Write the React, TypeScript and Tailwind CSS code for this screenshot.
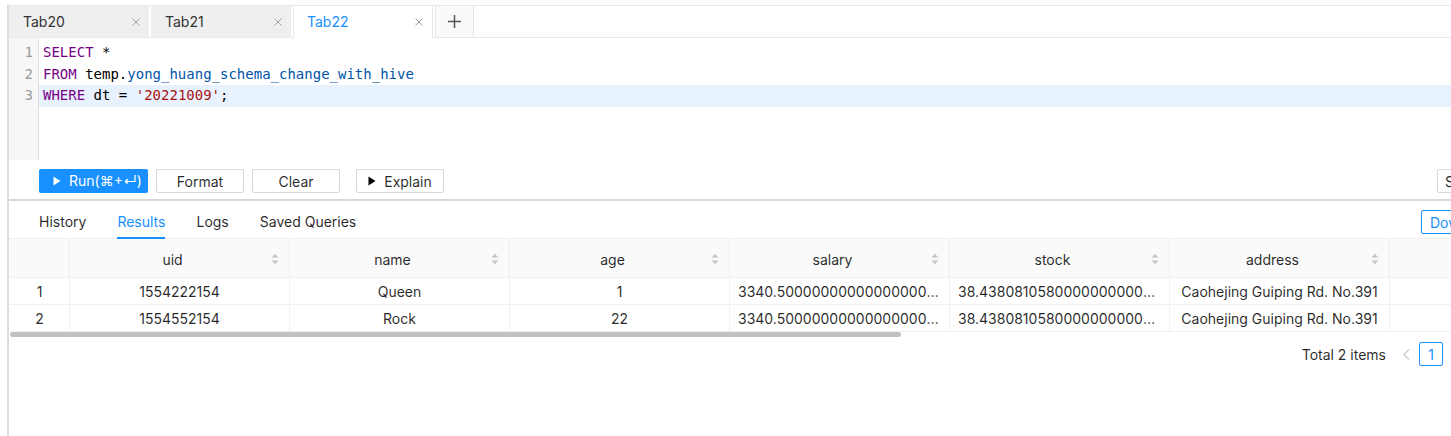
import React from "react";

const SortIcon = () => (
  <svg width="8" height="12" viewBox="0 0 8 12" className="shrink-0">
    <path d="M4 0.8 L7.4 4.6 H0.6 Z" fill="#c4c4c4" />
    <path d="M4 11.2 L7.4 7.4 H0.6 Z" fill="#c4c4c4" />
  </svg>
);

const CloseIcon = () => (
  <svg width="8" height="8" viewBox="0 0 8 8">
    <path d="M0.5 0.5 L7.5 7.5 M7.5 0.5 L0.5 7.5" stroke="#a0a0a0" strokeWidth="1" />
  </svg>
);

const PlayIcon = ({ color }: { color: string }) => (
  <svg width="8" height="10" viewBox="0 0 8 10">
    <path d="M0.5 0.5 L7.5 5 L0.5 9.5 Z" fill={color} />
  </svg>
);

const tabs = [
  { name: "Tab20", active: false },
  { name: "Tab21", active: false },
  { name: "Tab22", active: true },
];

const columns = ["uid", "name", "age", "salary", "stock", "address", ""];

const rows = [
  ["1", "1554222154", "Queen", "1", "3340.50000000000000000000", "38.43808105800000000000000", "Caohejing Guiping Rd. No.391", ""],
  ["2", "1554552154", "Rock", "22", "3340.50000000000000000000", "38.43808105800000000000000", "Caohejing Guiping Rd. No.391", ""],
];

export default function App() {
  return (
    <div className="w-[1451px] h-[436px] overflow-hidden bg-white font-['Inter',sans-serif] text-[14px] text-[rgba(0,0,0,0.85)]">
      <div className="ml-[7px] mt-[5px] h-[431px] w-[1444px] border-l-2 border-[#dcdcdc] flex flex-col">
        {/* SQL tab bar */}
        <div className="h-[33px] border-t border-b border-[#e8e8e8] flex items-stretch shrink-0">
          {tabs.map((t) => (
            <div
              key={t.name}
              className={
                t.active
                  ? "w-[140px] mr-[2px] -mb-px bg-white border-l border-r border-[#e8e8e8] flex items-center justify-between pl-[13px] pr-[9px] text-[#1890ff]"
                  : "w-[140px] mr-[2px] bg-[#efefef] flex items-center justify-between pl-[14px] pr-[9px] text-[#333]"
              }
            >
              <span className="leading-[22px]">{t.name}</span>
              <CloseIcon />
            </div>
          ))}
          <div className="w-[39px] bg-[#fafafa] border-l border-r border-[#e8e8e8] flex items-center justify-center">
            <svg width="13" height="13" viewBox="0 0 13 13">
              <path d="M6.5 0 V13 M0 6.5 H13" stroke="#555" strokeWidth="1.5" />
            </svg>
          </div>
        </div>

        {/* Editor */}
        <div className="h-[122px] flex shrink-0 font-['DejaVu_Sans_Mono',monospace] text-[14px]">
          <div className="w-[30px] bg-[#f7f7f7] border-r border-[#dddddd] pt-[4px] text-right pr-[5px] text-[#999] text-[13.5px]">
            <div className="leading-[21.5px]">1</div>
            <div className="leading-[21.5px]">2</div>
            <div className="leading-[21.5px]">3</div>
          </div>
          <div className="flex-1 pt-[4px] text-black">
            <div className="leading-[21.5px] pl-[4px] whitespace-pre">
              <span className="text-[#770088]">SELECT</span> *
            </div>
            <div className="leading-[21.5px] pl-[4px] whitespace-pre">
              <span className="text-[#770088]">FROM</span> temp.<span className="text-[#0055aa]">yong_huang_schema_change_with_hive</span>
            </div>
            <div className="leading-[21.5px] pl-[4px] whitespace-pre bg-[#e8f2ff]">
              <span className="text-[#770088]">WHERE</span> dt = <span className="text-[#aa1111]">'20221009'</span>;
            </div>
          </div>
        </div>

        {/* Buttons */}
        <div className="h-[41px] shrink-0 flex items-start pt-[9px] pl-[30px] border-b-2 border-[#d9d9d9]">
          <button className="h-[24px] w-[109px] rounded-[2px] bg-[#1890ff] text-white flex items-center pl-[14px] gap-[8px] shrink-0">
            <PlayIcon color="#ffffff" />
            <span className="leading-[22px]">Run(⌘+↵)</span>
          </button>
          <button className="h-[24px] w-[88px] ml-[8px] rounded-[2px] border border-[#d9d9d9] bg-white flex items-center justify-center shrink-0">
            Format
          </button>
          <button className="h-[24px] w-[88px] ml-[8px] rounded-[2px] border border-[#d9d9d9] bg-white flex items-center justify-center shrink-0">
            Clear
          </button>
          <button className="h-[24px] w-[88px] ml-[16px] rounded-[2px] border border-[#d9d9d9] bg-white flex items-center justify-center gap-[8px] shrink-0">
            <PlayIcon color="#000000" />
            <span>Explain</span>
          </button>
          <div className="ml-auto w-[14px] shrink-0 overflow-visible">
            <button className="h-[24px] px-[7px] rounded-[2px] border border-[#d9d9d9] bg-white flex items-center whitespace-nowrap">
              Save
            </button>
          </div>
        </div>

        {/* Result tabs */}
        <div className="h-[38px] shrink-0 flex items-start border-b border-[#f0f0f0] pl-[30px]">
          {["History", "Results", "Logs", "Saved Queries"].map((t) => (
            <div
              key={t}
              className={
                t === "Results"
                  ? "mr-[31px] pt-[10px] pb-[4px] leading-[22px] border-b-2 border-[#1890ff] text-[#1890ff]"
                  : "mr-[31px] pt-[10px] pb-[4px] leading-[22px] border-b-2 border-transparent"
              }
            >
              {t}
            </div>
          ))}
          <div className="ml-auto w-[30px] shrink-0 overflow-visible mt-[9px]">
            <button className="h-[24px] px-[8px] rounded-[2px] border border-[#1890ff] text-[#1890ff] bg-white flex items-center whitespace-nowrap">
              Download
            </button>
          </div>
        </div>

        {/* Table */}
        <div className="ml-px overflow-hidden">
          <div className="flex h-[39px] bg-[#fafafa] border-b border-[#f0f0f0] w-max">
            <div className="w-[60px] border-r border-[#f0f0f0] shrink-0" />
            {columns.map((c, i) => (
              <div key={i} className="w-[220px] shrink-0 border-r border-[#f0f0f0] flex items-center pt-[2px] pl-[8px] pr-[10px]">
                {c ? (
                  <>
                    <span className="flex-1 text-center">{c}</span>
                    <span className="ml-[4px]">
                      <SortIcon />
                    </span>
                  </>
                ) : null}
              </div>
            ))}
          </div>
          {rows.map((r) => (
            <div key={r[0]} className="flex h-[27px] border-b border-[#f0f0f0] w-max">
              <div className="w-[60px] border-r border-[#f0f0f0] shrink-0 flex items-center justify-center pt-[1px]">{r[0]}</div>
              {r.slice(1).map((v, i) => (
                <div
                  key={i}
                  className={
                    i === 3 || i === 4
                      ? "w-[220px] shrink-0 border-r border-[#f0f0f0] flex items-center px-[8px] pt-[1px] overflow-hidden"
                      : "w-[220px] shrink-0 border-r border-[#f0f0f0] flex items-center justify-center px-[8px] pt-[1px]"
                  }
                >
                  <span className={i === 3 || i === 4 ? "truncate block w-full" : ""}>{v}</span>
                </div>
              ))}
            </div>
          ))}
          <div className="h-[5px] w-[891px] rounded-full bg-[#c1c1c1]" />
        </div>

        {/* Pagination */}
        <div className="flex items-center justify-end pr-[8px] mt-[5px]">
          <span className="leading-[22px] pt-[1px]">Total 2 items</span>
          <span className="ml-[8px] w-[24px] h-[24px] flex items-center justify-center">
            <svg width="7" height="11" viewBox="0 0 7 11">
              <path d="M6 0.5 L1 5.5 L6 10.5" stroke="#c8c8c8" strokeWidth="1.2" fill="none" />
            </svg>
          </span>
          <span className="ml-px w-[24px] h-[24px] rounded-[2px] border border-[#1890ff] text-[#1890ff] flex items-center justify-center">
            1
          </span>
        </div>
      </div>
    </div>
  );
}
